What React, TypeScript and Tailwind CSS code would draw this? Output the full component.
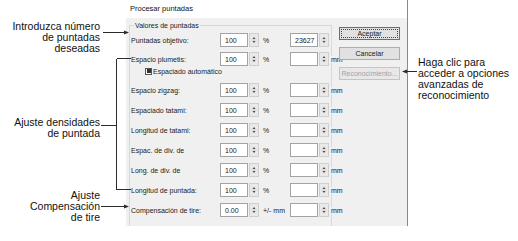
import type { FC } from "react";

const sans = "font-['Liberation_Sans',Arial,sans-serif]";

interface SpinBoxProps {
  value?: string;
}

const SpinBox: FC<SpinBoxProps> = ({ value }) => (
  <div className="flex h-[14px] shrink-0 items-stretch gap-px">
    <div className="flex w-[28px] items-center border border-[#a3a3a3] bg-white pl-[4px] text-[7px] leading-none text-[#1a1a1a]">
      {value}
    </div>
    <div className="flex w-[10px] flex-col border border-[#cfcfcf] bg-[#e9e9e9]">
      <svg width="8" height="12" viewBox="0 0 8 12">
        <path d="M2.5 5 L4 3 L5.5 5Z" fill="#4a4a4a" />
        <line x1="1" y1="6" x2="7" y2="6" stroke="#d6d6d6" strokeWidth="1" />
        <path d="M2.5 7 L4 9 L5.5 7Z" fill="#4a4a4a" />
      </svg>
    </div>
  </div>
);

interface RowProps {
  label: string;
  value: string;
  unit: string;
  right?: string;
  rightUnit?: string;
  className?: string;
}

const Row: FC<RowProps> = ({ label, value, unit, right, rightUnit, className }) => (
  <div className={`flex h-[14px] items-center ${className ?? ""}`}>
    <span className="w-[90px] shrink-0 pl-px text-[7px] leading-none text-[#1a1a1a]">{label}</span>
    <SpinBox value={value} />
    <span className="w-[31px] shrink-0 pl-[4px] text-[7px] leading-none text-[#1a1a1a]">{unit}</span>
    <SpinBox value={right} />
    {rightUnit && (
      <span className="ml-[2px] shrink-0 bg-[#f0f0f0] pr-px text-[7px] leading-none text-[#1a1a1a]">
        {rightUnit}
      </span>
    )}
  </div>
);

const rows: RowProps[] = [
  { label: "Espacio zigzag:", value: "100", unit: "%", rightUnit: "mm", className: "mt-[7px]" },
  { label: "Espaciado tatami:", value: "100", unit: "%", rightUnit: "mm", className: "mt-[6px]" },
  { label: "Longitud de tatami:", value: "100", unit: "%", rightUnit: "mm", className: "mt-[6px]" },
  { label: "Espac. de div. de", value: "100", unit: "%", rightUnit: "mm", className: "mt-[6px]" },
  { label: "Long. de div. de", value: "100", unit: "%", rightUnit: "mm", className: "mt-[6px]" },
  { label: "Longitud de puntada:", value: "100", unit: "%", rightUnit: "mm", className: "mt-[6px]" },
  { label: "Compensación de tire:", value: "0.00", unit: "+/- mm", rightUnit: "mm", className: "mt-[6px]" },
];

const Dialog: FC = () => (
  <div className="flex h-[226px] w-[282px] shrink-0 flex-col border-r border-[#8a8a8a]">
    <div className="flex h-[18px] items-center bg-white pl-[4px] text-[7.5px] leading-none text-[#111]">
      Procesar puntadas
    </div>
    <div className="flex flex-1 overflow-hidden bg-[#f0f0f0]">
      <fieldset className="ml-[3px] mt-[3px] h-[230px] w-[203px] min-w-0 shrink-0 border border-[#d9d9d9]">
        <legend className="ml-[4px] px-px text-[7px] leading-[9px] text-[#1a1a1a]">
          Valores de puntadas
        </legend>
        <Row label="Puntadas objetivo:" value="100" unit="%" right="23627" className="mt-[3px]" />
        <Row label="Espacio plumetis:" value="100" unit="%" rightUnit="mm" className="mt-[5px]" />
        <div className="flex h-[10px] items-center pl-[15px]">
          <span className="flex h-[7px] w-[7px] items-center justify-center border border-[#555] bg-white">
            <span className="h-[4px] w-[4px] bg-[#333]" />
          </span>
          <span className="ml-px text-[7px] leading-none text-[#1a1a1a]">Espaciado automático</span>
        </div>
        {rows.map((r) => (
          <Row key={r.label} {...r} />
        ))}
      </fieldset>
      <div className="ml-[7px] mt-[9px] flex w-[61px] shrink-0 flex-col gap-[7px]">
        <button className="flex h-[13px] items-center justify-center border border-[#3c78b4] bg-[#e1e1e1] text-[7px] leading-none text-[#1a1a1a] outline-1 outline-offset-[-3px] outline-dotted outline-[#444]">
          Aceptar
        </button>
        <button className="flex h-[13px] items-center justify-center border border-[#adadad] bg-[#e1e1e1] text-[7px] leading-none text-[#1a1a1a]">
          Cancelar
        </button>
        <button className="flex h-[13px] items-center justify-center whitespace-nowrap border border-[#c4c4c4] bg-[#e8e8e8] text-[7px] leading-none text-[#a2a2a2]">
          Reconocimiento...
        </button>
      </div>
    </div>
  </div>
);

const Leaders: FC = () => (
  <svg
    className="pointer-events-none absolute left-0 top-0"
    width="518"
    height="241"
    viewBox="0 0 518 241"
  >
    <g stroke="#2b2b2b" strokeWidth="1" fill="none" shapeRendering="crispEdges">
      <line x1="103" y1="32.5" x2="125" y2="32.5" />
      <line x1="101" y1="125.5" x2="116.5" y2="125.5" />
      <line x1="116.5" y1="58.5" x2="116.5" y2="189.5" />
      <line x1="116.5" y1="58.5" x2="131" y2="58.5" />
      <line x1="116.5" y1="189.5" x2="131" y2="189.5" />
      <line x1="101" y1="206.5" x2="125" y2="206.5" />
      <line x1="406" y1="71.5" x2="417" y2="71.5" />
    </g>
    <g fill="#2b2b2b">
      <polygon points="129,32.5 124,30.5 124,34.5" />
      <polygon points="129,206.5 124,204.5 124,208.5" />
      <polygon points="402,71.5 407,69.5 407,73.5" />
    </g>
  </svg>
);

export default function App() {
  return (
    <div className={`relative flex h-[241px] w-[518px] bg-white ${sans}`}>
      <div className="flex w-[126px] shrink-0 flex-col items-end pr-[26px] text-right text-[10.5px] leading-[11px] text-[#111]">
        <p className="mt-[21px]">
          Introduzca número
          <br />
          de puntadas
          <br />
          deseadas
        </p>
        <p className="mt-[63px]">
          Ajuste densidades
          <br />
          de puntada
        </p>
        <p className="mt-[51px]">
          Ajuste
          <br />
          Compensación
          <br />
          de tire
        </p>
      </div>
      <Dialog />
      <div className="pl-[10px] text-[10.5px] leading-[11px] text-[#111]">
        <p className="mt-[57px]">
          Haga clic para
          <br />
          acceder a opciones
          <br />
          avanzadas de
          <br />
          reconocimiento
        </p>
      </div>
      <Leaders />
    </div>
  );
}
